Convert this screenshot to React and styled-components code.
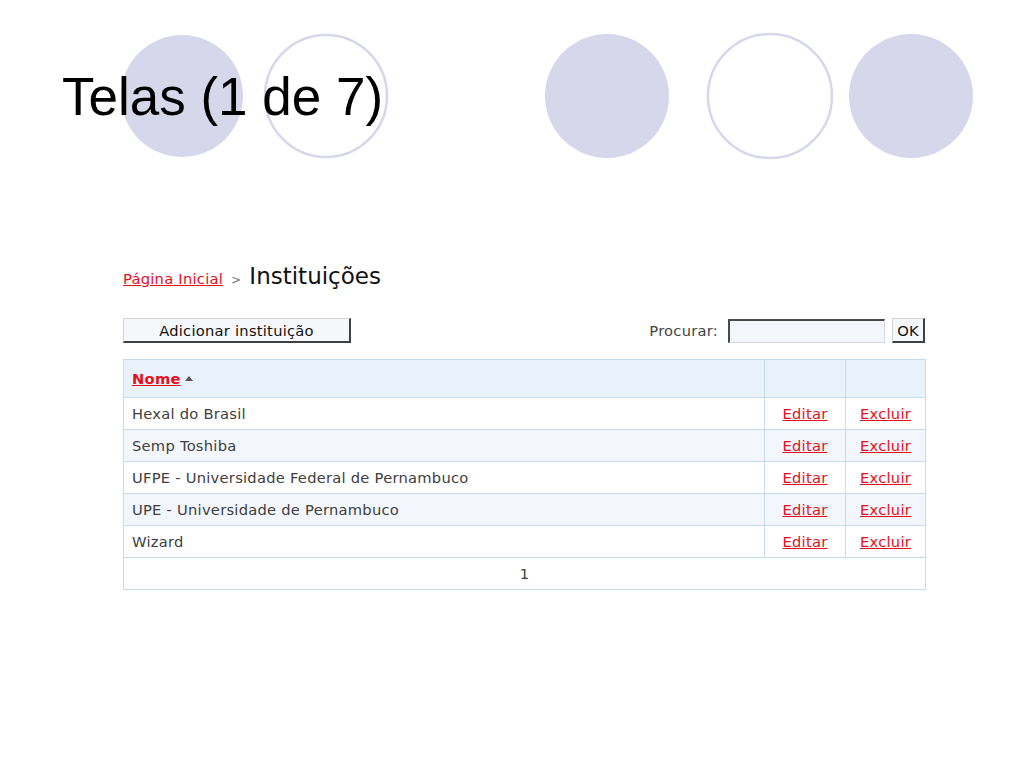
import styled, { createGlobalStyle } from "styled-components";

const GlobalStyle = createGlobalStyle`
  html, body {
    margin: 0;
    padding: 0;
    background: #ffffff;
  }
`;

const Slide = styled.div`
  width: 1024px;
  height: 768px;
  overflow: hidden;
  background: #ffffff;
`;

const Header = styled.header`
  position: relative;
  height: 180px;

  svg {
    display: block;
  }
`;

const Title = styled.h1`
  position: absolute;
  left: 62px;
  top: 71px;
  margin: 0;
  font-family: "Liberation Sans", Arial, sans-serif;
  font-weight: normal;
  font-size: 53px;
  line-height: 52px;
  color: #000000;
`;

const Main = styled.main`
  margin: 83px 0 0 123px;
  width: 802px;
  font-family: "DejaVu Sans", Verdana, sans-serif;
  font-size: 14.7px;
  letter-spacing: 0.25px;
  color: #404040;
`;

const Breadcrumb = styled.div`
  display: flex;
  align-items: baseline;
  gap: 8px;
  height: 26px;
  line-height: 26px;
`;

const Link = styled.a`
  color: #e3101e;
  text-decoration: underline;
  font-weight: ${(p) => (p.$bold ? "bold" : "normal")};
  cursor: pointer;
`;

const Sep = styled.span`
  color: #777;
  font-size: 12px;
`;

const PageTitle = styled.span`
  font-size: 23px;
  letter-spacing: 0;
  color: #111;
`;

const Toolbar = styled.div`
  display: flex;
  align-items: center;
  margin-top: 29px;
  height: 25px;
`;

const Button = styled.button`
  box-sizing: border-box;
  width: ${(p) => p.$width}px;
  height: 25px;
  padding: 0;
  font-family: inherit;
  font-size: 14.7px;
  letter-spacing: 0.25px;
  color: #111;
  background: #f6f7fb;
  border-style: solid;
  border-width: 1px 2px 2px 1px;
  border-color: #d4d4d4 #404040 #404040 #d4d4d4;
`;

const Search = styled.div`
  margin-left: auto;
  display: flex;
  align-items: center;
  gap: 7px;
`;

const Label = styled.label`
  color: #444;
  margin-right: 3px;
`;

const Input = styled.input`
  box-sizing: border-box;
  width: 157px;
  height: 24px;
  background: #f3f7fc;
  border-style: solid;
  border-width: 2px 1px 1px 2px;
  border-color: #4a4a4a #d8d8d8 #d8d8d8 #4a4a4a;
  outline: none;
`;

const Table = styled.table`
  margin-top: 16px;
  width: 802px;
  border-collapse: collapse;
  table-layout: fixed;
`;

const Th = styled.th`
  height: 37px;
  padding: 0 8px;
  text-align: left;
  background: #e9f2fb;
  border: 1px solid #c6dbee;
  font-weight: normal;
`;

const Row = styled.tr`
  background: ${(p) => (p.$alt ? "#f3f7fd" : "#ffffff")};
`;

const Td = styled.td`
  height: 31px;
  padding: 0 8px;
  border: 1px solid #c6dbee;
  text-align: ${(p) => p.$align || "left"};
  white-space: nowrap;
`;

const SortArrow = styled.span`
  display: inline-block;
  margin-left: 4px;
  vertical-align: 3px;
  border-left: 4.5px solid transparent;
  border-right: 4.5px solid transparent;
  border-bottom: 5px solid #555;
`;

const rows = [
  "Hexal do Brasil",
  "Semp Toshiba",
  "UFPE - Universidade Federal de Pernambuco",
  "UPE - Universidade de Pernambuco",
  "Wizard",
];

const Circles = () => (
  <svg width="1024" height="180" viewBox="0 0 1024 180">
    <g fill="#d7d7eb">
      <circle cx="182" cy="96" r="61" />
      <circle cx="607" cy="96" r="62" />
      <circle cx="911" cy="96" r="62" />
    </g>
    <g fill="none" stroke="#d7d7eb" strokeWidth="2.5">
      <circle cx="326" cy="96" r="61" />
      <circle cx="770" cy="96" r="62" />
    </g>
  </svg>
);

const App = () => {
  return (
    <Slide>
      <GlobalStyle />
      <Header>
        <Circles />
        <Title>Telas (1 de 7)</Title>
      </Header>
      <Main>
        <Breadcrumb>
          <Link>Página Inicial</Link>
          <Sep>&gt;</Sep>
          <PageTitle>Instituições</PageTitle>
        </Breadcrumb>
        <Toolbar>
          <Button $width={228}>Adicionar instituição</Button>
          <Search>
            <Label>Procurar:</Label>
            <Input type="text" />
            <Button $width={33}>OK</Button>
          </Search>
        </Toolbar>
        <Table>
          <colgroup>
            <col style={{ width: 641 }} />
            <col style={{ width: 81 }} />
            <col style={{ width: 80 }} />
          </colgroup>
          <thead>
            <tr>
              <Th>
                <Link $bold>Nome</Link>
                <SortArrow />
              </Th>
              <Th />
              <Th />
            </tr>
          </thead>
          <tbody>
            {rows.map((name, i) => (
              <Row key={name} $alt={i % 2 === 1}>
                <Td>{name}</Td>
                <Td $align="center">
                  <Link>Editar</Link>
                </Td>
                <Td $align="center">
                  <Link>Excluir</Link>
                </Td>
              </Row>
            ))}
            <Row>
              <Td colSpan={3} $align="center">
                1
              </Td>
            </Row>
          </tbody>
        </Table>
      </Main>
    </Slide>
  );
};

export default App;
